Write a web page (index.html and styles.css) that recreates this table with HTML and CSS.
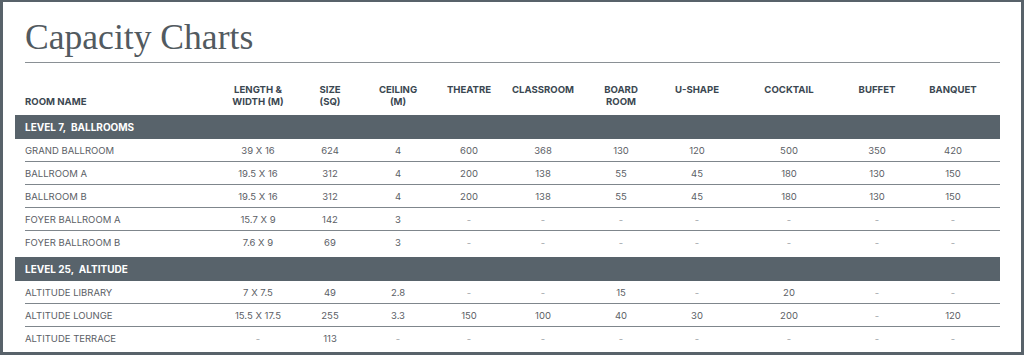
FILE: index.html
```html
<!DOCTYPE html>
<html lang="en">
<head>
<meta charset="utf-8">
<title>Capacity Charts</title>
<link rel="stylesheet" href="styles.css">
</head>
<body>
<div class="frame">
  <h1 class="title">Capacity Charts</h1>
  <div class="chart">
    <div class="row head">
      <div class="c name">ROOM NAME</div>
      <div class="c">LENGTH &amp;<br>WIDTH (M)</div>
      <div class="c">SIZE<br>(SQ)</div>
      <div class="c">CEILING<br>(M)</div>
      <div class="c">THEATRE</div>
      <div class="c">CLASSROOM</div>
      <div class="c">BOARD<br>ROOM</div>
      <div class="c">U-SHAPE</div>
      <div class="c">COCKTAIL</div>
      <div class="c">BUFFET</div>
      <div class="c">BANQUET</div>
    </div>

    <div class="section">
      <div class="bar">LEVEL 7,&nbsp; BALLROOMS</div>
      <div class="row"><div class="c name">GRAND BALLROOM</div><div class="c">39 X 16</div><div class="c">624</div><div class="c">4</div><div class="c">600</div><div class="c">368</div><div class="c">130</div><div class="c">120</div><div class="c">500</div><div class="c">350</div><div class="c">420</div></div>
      <div class="row"><div class="c name">BALLROOM A</div><div class="c">19.5 X 16</div><div class="c">312</div><div class="c">4</div><div class="c">200</div><div class="c">138</div><div class="c">55</div><div class="c">45</div><div class="c">180</div><div class="c">130</div><div class="c">150</div></div>
      <div class="row"><div class="c name">BALLROOM B</div><div class="c">19.5 X 16</div><div class="c">312</div><div class="c">4</div><div class="c">200</div><div class="c">138</div><div class="c">55</div><div class="c">45</div><div class="c">180</div><div class="c">130</div><div class="c">150</div></div>
      <div class="row"><div class="c name">FOYER BALLROOM A</div><div class="c">15.7 X 9</div><div class="c">142</div><div class="c">3</div><div class="c dash">-</div><div class="c dash">-</div><div class="c dash">-</div><div class="c dash">-</div><div class="c dash">-</div><div class="c dash">-</div><div class="c dash">-</div></div>
      <div class="row last"><div class="c name">FOYER BALLROOM B</div><div class="c">7.6 X 9</div><div class="c">69</div><div class="c">3</div><div class="c dash">-</div><div class="c dash">-</div><div class="c dash">-</div><div class="c dash">-</div><div class="c dash">-</div><div class="c dash">-</div><div class="c dash">-</div></div>
    </div>

    <div class="section">
      <div class="bar">LEVEL 25,&nbsp; ALTITUDE</div>
      <div class="row"><div class="c name">ALTITUDE LIBRARY</div><div class="c">7 X 7.5</div><div class="c">49</div><div class="c">2.8</div><div class="c dash">-</div><div class="c dash">-</div><div class="c">15</div><div class="c dash">-</div><div class="c">20</div><div class="c dash">-</div><div class="c dash">-</div></div>
      <div class="row"><div class="c name">ALTITUDE LOUNGE</div><div class="c">15.5 X 17.5</div><div class="c">255</div><div class="c">3.3</div><div class="c">150</div><div class="c">100</div><div class="c">40</div><div class="c">30</div><div class="c">200</div><div class="c dash">-</div><div class="c">120</div></div>
      <div class="row last"><div class="c name">ALTITUDE TERRACE</div><div class="c dash">-</div><div class="c">113</div><div class="c dash">-</div><div class="c dash">-</div><div class="c dash">-</div><div class="c dash">-</div><div class="c dash">-</div><div class="c dash">-</div><div class="c dash">-</div><div class="c dash">-</div></div>
    </div>
  </div>
</div>
</body>
</html>
```

FILE: styles.css
```css
* { box-sizing: border-box; }

html, body {
  margin: 0;
  padding: 0;
  background: #ffffff;
}

.frame {
  width: 1024px;
  height: 355px;
  overflow: hidden;
  border: 3px solid #58626a;
  border-top-width: 2px;
  padding: 0 21px 0 22px;
  background: #ffffff;
}

.title {
  margin: 0;
  padding-top: 15px;
  height: 61px;
  font-family: "Liberation Serif", "Times New Roman", serif;
  font-weight: normal;
  font-size: 35.6px;
  line-height: 40px;
  color: #525a60;
  border-bottom: 1px solid #8a9095;
}

.chart {
  font-family: Inter, "Noto Sans", sans-serif;
  font-size: 9.5px;
}

.row {
  display: grid;
  grid-template-columns: 197px 72px 72px 64px 78px 70px 86px 66px 118px 58px 94px;
  height: 23px;
  align-items: center;
  border-bottom: 1px solid #7f868c;
  color: #5b6066;
}

.row.last { border-bottom: none; }

.c {
  text-align: center;
  white-space: nowrap;
}

.c.name { text-align: left; }

.c.dash { color: #a3a7ab; }

.row.head {
  height: 52px;
  align-items: start;
  padding: 21px 0 8px;
  border-bottom: none;
  font-weight: 700;
  font-size: 9.6px;
  line-height: 12px;
  color: #3b4751;
}

.row.head .name { align-self: end; }

.section + .section { margin-top: 3px; }

.bar {
  margin-left: -10px;
  height: 24px;
  line-height: 24px;
  padding-left: 10px;
  background: #58636b;
  color: #ffffff;
  font-weight: 700;
  font-size: 10px;
}
```
